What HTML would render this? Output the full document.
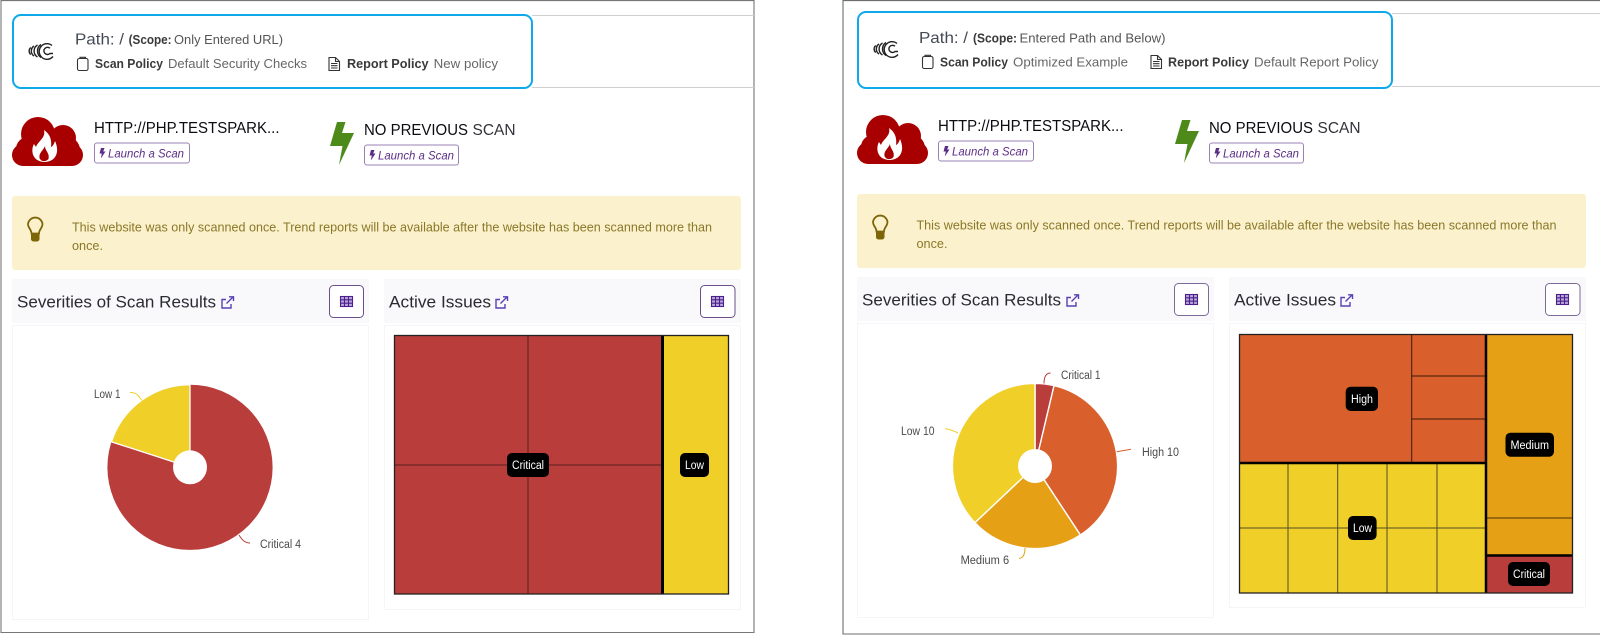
<!DOCTYPE html>
<html>
<head>
<meta charset="utf-8">
<title>Scan comparison</title>
<style>
html,body{margin:0;padding:0;background:#fff;width:1600px;height:635px;overflow:hidden}
svg{display:block}
text{font-family:"Liberation Sans",sans-serif}
.path{font-size:16px;fill:#444a55}
.sc{font-size:12.5px;fill:#3a3a3a;font-weight:bold}
.scv{font-size:13px;fill:#555}
.pl{font-size:12.5px;fill:#3a3a3a;font-weight:bold}
.pv{font-size:13px;fill:#666}
.h{font-size:16px;fill:#0c0c12}
.h2{font-size:16px;fill:#33333b}
.lz{font-size:12px;font-style:italic;fill:#5c2d86}
.al{font-size:13px;fill:#8a7728}
.t{font-size:17px;fill:#2a2a32}
.lb{font-size:11.500px;fill:#4a4a4a}
.tl{font-size:11.500px;fill:#fff}
</style>
</head>
<body>
<svg width="1600" height="635" viewBox="0 0 1600 635" xmlns="http://www.w3.org/2000/svg">
<rect width="1600" height="635" fill="#fff"/>

<!-- frames -->
<path d="M1 633V.6H754V632.5H1" fill="none" stroke="#777" stroke-width="1.100"/>
<path d="M1600 .6H843V634H1600" fill="none" stroke="#6e6e6e" stroke-width="1.100"/>

<!-- top lines -->
<path d="M532 15.500H754M532 87.500H754" stroke="#cfcfcf" stroke-width="1"/>
<path d="M1392 13.500H1600M1392 86.500H1600" stroke="#cfcfcf" stroke-width="1"/>

<!-- LEFT top box -->
<rect x="13" y="15" width="519" height="73" rx="8" fill="#fff" stroke="#0ea9e8" stroke-width="2"/>
<g fill="none" stroke="#222" stroke-width="1.400">
<path d="M52 45.500A7.800 7.800 0 1 0 53 56.500"/><path d="M50 48.300A3.600 3.600 0 1 0 50 53.500L53 53.500"/><path d="M41 44.500A7.800 7.800 0 0 0 41 57.500"/><path d="M37.500 45A7 7 0 0 0 37.500 57"/><path d="M34 46A6 6 0 0 0 34 56"/><path d="M30.800 47.500A4.500 4.500 0 0 0 30.800 54.500"/>
</g>
<text class="path" x="75" y="44.500" textLength="49" lengthAdjust="spacingAndGlyphs">Path: /</text>
<text class="sc" x="128.600" y="44" textLength="43" lengthAdjust="spacingAndGlyphs">(Scope:</text>
<text class="scv" x="174" y="44" textLength="109" lengthAdjust="spacingAndGlyphs">Only Entered URL)</text>
<g fill="none" stroke="#333" stroke-width="1.100">
<rect x="77.500" y="58.500" width="10.500" height="12" rx="1.800"/><path d="M80 58.500V57.300H85.500V58.500"/>
<path d="M329 57.500H335.500L339.500 61.500V70.500H329Z"/><path d="M335.500 57.500V61.500H339.500M331 63.500H337.500M331 65.700H337.500M331 68H337.500"/>
</g>
<text class="pl" x="95" y="68" textLength="68" lengthAdjust="spacingAndGlyphs">Scan Policy</text>
<text class="pv" x="168" y="68" textLength="139" lengthAdjust="spacingAndGlyphs">Default Security Checks</text>
<text class="pl" x="347" y="68" textLength="81.600" lengthAdjust="spacingAndGlyphs">Report Policy</text>
<text class="pv" x="433.700" y="68" textLength="64.300" lengthAdjust="spacingAndGlyphs">New policy</text>

<!-- RIGHT top box -->
<rect x="858" y="12" width="534" height="76" rx="8" fill="#fff" stroke="#0ea9e8" stroke-width="2"/>
<g transform="translate(845,-2)" fill="none" stroke="#222" stroke-width="1.400">
<path d="M52 45.500A7.800 7.800 0 1 0 53 56.500"/><path d="M50 48.300A3.600 3.600 0 1 0 50 53.500L53 53.500"/><path d="M41 44.500A7.800 7.800 0 0 0 41 57.500"/><path d="M37.500 45A7 7 0 0 0 37.500 57"/><path d="M34 46A6 6 0 0 0 34 56"/><path d="M30.800 47.500A4.500 4.500 0 0 0 30.800 54.500"/>
</g>
<text class="path" x="919" y="43" textLength="49" lengthAdjust="spacingAndGlyphs">Path: /</text>
<text class="sc" x="973" y="42.500" textLength="44" lengthAdjust="spacingAndGlyphs">(Scope:</text>
<text class="scv" x="1019.500" y="42.500" textLength="146" lengthAdjust="spacingAndGlyphs">Entered Path and Below)</text>
<g transform="translate(845,-2)" fill="none" stroke="#333" stroke-width="1.100">
<rect x="77.500" y="58.500" width="10.500" height="12" rx="1.800"/><path d="M80 58.500V57.300H85.500V58.500"/>
</g>
<g transform="translate(822,-2)" fill="none" stroke="#333" stroke-width="1.100">
<path d="M329 57.500H335.500L339.500 61.500V70.500H329Z"/><path d="M335.500 57.500V61.500H339.500M331 63.500H337.500M331 65.700H337.500M331 68H337.500"/>
</g>
<text class="pl" x="940" y="66.500" textLength="68" lengthAdjust="spacingAndGlyphs">Scan Policy</text>
<text class="pv" x="1013" y="66.500" textLength="115" lengthAdjust="spacingAndGlyphs">Optimized Example</text>
<text class="pl" x="1168" y="66.500" textLength="81" lengthAdjust="spacingAndGlyphs">Report Policy</text>
<text class="pv" x="1254" y="66.500" textLength="124.500" lengthAdjust="spacingAndGlyphs">Default Report Policy</text>

<!-- LEFT block -->
<g id="l">
<g fill="#a80000">
<circle cx="38" cy="134" r="17"/><circle cx="63" cy="138" r="13"/><circle cx="72" cy="155" r="11"/><circle cx="23" cy="155" r="11"/><circle cx="28" cy="149" r="12"/><circle cx="67" cy="150" r="13"/><rect x="23" y="135" width="49" height="31"/>
</g>
<path d="M44 130C46 138 38 141 36 147L34 144C31 149 31 161 44 162C56 162 60 152 55 141C54 144 53 146 51 147C52 140 50 134 44 130Z" fill="#fff"/>
<path d="M45 146C45 151 50 153 48.500 159C46 162 41 162 39.500 158C38.500 153 43 151 45 146Z" fill="#a80000"/>
<text class="h" x="94" y="133" textLength="185.500" lengthAdjust="spacingAndGlyphs">HTTP://PHP.TESTSPARK...</text>
<rect x="94.500" y="143" width="95" height="20" rx="2.500" fill="#fff" stroke="#9b80b5" stroke-width="1"/>
<path d="M101 148H104.500L103.200 151.500H105.500L100.800 158.500L101.800 153.500H99.500Z" fill="#5c2d86"/>
<text class="lz" x="108" y="157.500" textLength="76" lengthAdjust="spacingAndGlyphs">Launch a Scan</text>
<path d="M337 122H345.500L342 133H354L339 165L342.500 146H330Z" fill="#4d8a1a"/>
<text class="h" x="364" y="135" textLength="104" lengthAdjust="spacingAndGlyphs">NO PREVIOUS</text>
<text class="h2" x="472.500" y="135" textLength="43" lengthAdjust="spacingAndGlyphs">SCAN</text>
<rect x="364.500" y="145" width="94" height="20" rx="2.500" fill="#fff" stroke="#9b80b5" stroke-width="1"/>
<path d="M371 150H374.500L373.200 153.500H375.500L370.800 160.500L371.800 155.500H369.500Z" fill="#5c2d86"/>
<text class="lz" x="378" y="159.500" textLength="76" lengthAdjust="spacingAndGlyphs">Launch a Scan</text>

<rect x="12" y="196" width="729" height="74" rx="3" fill="#fbf2cd"/>
<g fill="none" stroke="#7d6608" stroke-width="1.800">
<path d="M31.500 233.500C31.500 229.500 28 228 28 224A7.300 7.300 0 0 1 42.500 224C42.500 228 39 229.500 39 233.500Z"/>
</g>
<path d="M31 233.500H39.500V239.500A3 3 0 0 1 36.500 241.500H34A3 3 0 0 1 31 239.500Z" fill="#7d6608"/>
<text class="al" x="72" y="231.500" textLength="640" lengthAdjust="spacingAndGlyphs">This website was only scanned once. Trend reports will be available after the website has been scanned more than</text>
<text class="al" x="72" y="250" textLength="31" lengthAdjust="spacingAndGlyphs">once.</text>

<rect x="12" y="279" width="357" height="44" fill="#f9f9fc"/>
<rect x="12.500" y="325.500" width="356" height="294" fill="#fff" stroke="#f3f5f8"/>
<text class="t" x="17" y="307.500" textLength="199" lengthAdjust="spacingAndGlyphs">Severities of Scan Results</text>
<g fill="none" stroke="#5a3fb5" stroke-width="1.400">
<path d="M231 304V308H222V299.500H226"/><path d="M226.500 303.500L233 297M229 296.800H233.500V301"/>
</g>
<rect x="329.500" y="285.500" width="34" height="32" rx="4" fill="#fff" stroke="#6a4f8a"/>
<g fill="none" stroke="#4b1f8c" stroke-width="1.100"><rect x="340.500" y="296.500" width="12" height="10" fill="#b9a8da"/><path d="M340.500 299.800H352.500M340.500 303.200H352.500M344.500 296.500V306.500M348.500 296.500V306.500"/></g>

<rect x="384" y="279" width="357" height="44" fill="#f9f9fc"/>
<rect x="384.500" y="325.500" width="356" height="284" fill="#fff" stroke="#f3f5f8"/>
<text class="t" x="389" y="307.500" textLength="102" lengthAdjust="spacingAndGlyphs">Active Issues</text>
<g transform="translate(274,0)" fill="none" stroke="#5a3fb5" stroke-width="1.400">
<path d="M231 304V308H222V299.500H226"/><path d="M226.500 303.500L233 297M229 296.800H233.500V301"/>
</g>
<rect x="700.500" y="285.500" width="34.500" height="32" rx="4" fill="#fff" stroke="#6a4f8a"/>
<g transform="translate(371,0)">
<g fill="none" stroke="#4b1f8c" stroke-width="1.100"><rect x="340.500" y="296.500" width="12" height="10" fill="#b9a8da"/><path d="M340.500 299.800H352.500M340.500 303.200H352.500M344.500 296.500V306.500M348.500 296.500V306.500"/></g>
</g>
</g>

<!-- RIGHT block (same structure, shifted) -->
<g transform="translate(845,-2)">
<g fill="#a80000">
<circle cx="38" cy="134" r="17"/><circle cx="63" cy="138" r="13"/><circle cx="72" cy="155" r="11"/><circle cx="23" cy="155" r="11"/><circle cx="28" cy="149" r="12"/><circle cx="67" cy="150" r="13"/><rect x="23" y="135" width="49" height="31"/>
</g>
<path d="M44 130C46 138 38 141 36 147L34 144C31 149 31 161 44 162C56 162 60 152 55 141C54 144 53 146 51 147C52 140 50 134 44 130Z" fill="#fff"/>
<path d="M45 146C45 151 50 153 48.500 159C46 162 41 162 39.500 158C38.500 153 43 151 45 146Z" fill="#a80000"/>
<text class="h" x="93" y="133" textLength="185.500" lengthAdjust="spacingAndGlyphs">HTTP://PHP.TESTSPARK...</text>
<rect x="93.500" y="143" width="95" height="20" rx="2.500" fill="#fff" stroke="#9b80b5" stroke-width="1"/>
<path d="M100 148H103.500L102.200 151.500H104.500L99.800 158.500L100.800 153.500H98.500Z" fill="#5c2d86"/>
<text class="lz" x="107" y="157.500" textLength="76" lengthAdjust="spacingAndGlyphs">Launch a Scan</text>
<path d="M337 122H345.500L342 133H354L339 165L342.500 146H330Z" fill="#4d8a1a"/>
<text class="h" x="364" y="135" textLength="104" lengthAdjust="spacingAndGlyphs">NO PREVIOUS</text>
<text class="h2" x="472.500" y="135" textLength="43" lengthAdjust="spacingAndGlyphs">SCAN</text>
<rect x="364.500" y="145" width="94" height="20" rx="2.500" fill="#fff" stroke="#9b80b5" stroke-width="1"/>
<path d="M371 150H374.500L373.200 153.500H375.500L370.800 160.500L371.800 155.500H369.500Z" fill="#5c2d86"/>
<text class="lz" x="378" y="159.500" textLength="76" lengthAdjust="spacingAndGlyphs">Launch a Scan</text>

<rect x="12" y="196" width="729" height="74" rx="3" fill="#fbf2cd"/>
<g fill="none" stroke="#7d6608" stroke-width="1.800">
<path d="M31.500 233.500C31.500 229.500 28 228 28 224A7.300 7.300 0 0 1 42.500 224C42.500 228 39 229.500 39 233.500Z"/>
</g>
<path d="M31 233.500H39.500V239.500A3 3 0 0 1 36.500 241.500H34A3 3 0 0 1 31 239.500Z" fill="#7d6608"/>
<text class="al" x="71.500" y="231.500" textLength="640" lengthAdjust="spacingAndGlyphs">This website was only scanned once. Trend reports will be available after the website has been scanned more than</text>
<text class="al" x="71.500" y="250" textLength="31" lengthAdjust="spacingAndGlyphs">once.</text>

<rect x="12" y="279" width="357" height="44" fill="#f9f9fc"/>
<rect x="12.500" y="325.500" width="356" height="294" fill="#fff" stroke="#f3f5f8"/>
<text class="t" x="17" y="307.500" textLength="199" lengthAdjust="spacingAndGlyphs">Severities of Scan Results</text>
<g fill="none" stroke="#5a3fb5" stroke-width="1.400">
<path d="M231 304V308H222V299.500H226"/><path d="M226.500 303.500L233 297M229 296.800H233.500V301"/>
</g>
<rect x="329.500" y="285.500" width="34" height="32" rx="4" fill="#fff" stroke="#7d6a99"/>
<g fill="none" stroke="#4b1f8c" stroke-width="1.100"><rect x="340.500" y="296.500" width="12" height="10" fill="#b9a8da"/><path d="M340.500 299.800H352.500M340.500 303.200H352.500M344.500 296.500V306.500M348.500 296.500V306.500"/></g>

<rect x="384" y="279" width="357" height="44" fill="#f9f9fc"/>
<rect x="384.500" y="325.500" width="356" height="284" fill="#fff" stroke="#f3f5f8"/>
<text class="t" x="389" y="307.500" textLength="102" lengthAdjust="spacingAndGlyphs">Active Issues</text>
<g transform="translate(274,0)" fill="none" stroke="#5a3fb5" stroke-width="1.400">
<path d="M231 304V308H222V299.500H226"/><path d="M226.500 303.500L233 297M229 296.800H233.500V301"/>
</g>
<rect x="700.500" y="285.500" width="34.500" height="32" rx="4" fill="#fff" stroke="#7d6a99"/>
<g transform="translate(371,0)">
<g fill="none" stroke="#4b1f8c" stroke-width="1.100"><rect x="340.500" y="296.500" width="12" height="10" fill="#b9a8da"/><path d="M340.500 299.800H352.500M340.500 303.200H352.500M344.500 296.500V306.500M348.500 296.500V306.500"/></g>
</g>
</g>

<!-- LEFT pie -->
<circle cx="190" cy="467.300" r="82.600" fill="#b83d3b"/>
<path d="M190 467.300L111.400 441.800A82.600 82.600 0 0 1 190 384.700Z" fill="#f0cf29" stroke="#fff" stroke-width="1.300"/>
<circle cx="190" cy="467.300" r="17" fill="#fff"/>
<path d="M130 392.500C136 392 139 396 142 400.500" fill="none" stroke="#f0cf29"/>
<path d="M239 535C242 540 245 543 250 543" fill="none" stroke="#b83d3b"/>
<text class="lb" x="94" y="398" textLength="26.500" lengthAdjust="spacingAndGlyphs">Low 1</text>
<text class="lb" x="260" y="548" textLength="41" lengthAdjust="spacingAndGlyphs">Critical 4</text>

<!-- RIGHT pie -->
<g stroke="#fff" stroke-width="1.400">
<path d="M1035 466L1035 383.400A82.600 82.600 0 0 1 1054.050 385.630Z" fill="#b83d3b"/>
<path d="M1035 466L1054.050 385.630A82.600 82.600 0 0 1 1080.390 535.010Z" fill="#d9602c"/>
<path d="M1035 466L1080.390 535.010A82.600 82.600 0 0 1 974.920 522.680Z" fill="#e5a016"/>
<path d="M1035 466L974.920 522.680A82.600 82.600 0 0 1 1035 383.400Z" fill="#f0cf29"/>
</g>
<circle cx="1035" cy="466" r="17" fill="#fff"/>
<path d="M1044 383.500C1044 377 1046 373 1050.600 373" fill="none" stroke="#b83d3b"/>
<path d="M1116.700 451.700L1131 449.300" fill="none" stroke="#d9602c"/>
<path d="M945 428.700C950 429 954 431 958 433" fill="none" stroke="#f0cf29"/>
<path d="M1025 548C1025 554 1023 558 1019 558.500" fill="none" stroke="#e5a016"/>
<text class="lb" x="1061" y="379" textLength="39.500" lengthAdjust="spacingAndGlyphs">Critical 1</text>
<text class="lb" x="1142" y="456" textLength="37" lengthAdjust="spacingAndGlyphs">High 10</text>
<text class="lb" x="901" y="435" textLength="33.500" lengthAdjust="spacingAndGlyphs">Low 10</text>
<text class="lb" x="960.600" y="564" textLength="48.500" lengthAdjust="spacingAndGlyphs">Medium 6</text>

<!-- LEFT treemap -->
<rect x="394" y="335" width="268" height="259" fill="#b83d3b"/>
<rect x="662" y="335" width="67" height="259" fill="#f0cf29"/>
<path d="M528 335V594M394 465H662" stroke="#5c1f1f" stroke-width="1"/>
<path d="M662.500 335V594" stroke="#000" stroke-width="3"/>
<rect x="394.500" y="335.500" width="334" height="258.500" fill="none" stroke="#222" stroke-width="1.300"/>
<rect x="507" y="453" width="42" height="24" rx="5" fill="#000"/>
<text class="tl" x="512" y="469" textLength="32" lengthAdjust="spacingAndGlyphs">Critical</text>
<rect x="680" y="453" width="29" height="24" rx="5" fill="#000"/>
<text class="tl" x="685" y="469" textLength="19" lengthAdjust="spacingAndGlyphs">Low</text>

<!-- RIGHT treemap -->
<rect x="1239" y="334" width="247" height="129" fill="#d9602c"/>
<rect x="1239" y="463" width="247" height="130" fill="#f0cf29"/>
<rect x="1486" y="334" width="87" height="221" fill="#e5a016"/>
<rect x="1486" y="555" width="87" height="38" fill="#b83d3b"/>
<path d="M1411.700 334V463M1411.700 376H1486M1411.700 419H1486" stroke="#3a1a0a" stroke-width="1"/>
<path d="M1288 463V593M1337.700 463V593M1387 463V593M1437 463V593M1239 528H1486" stroke="#222" stroke-opacity=".75" stroke-width="1"/>
<path d="M1486 518H1573" stroke="#4a3208" stroke-width="1"/>
<path d="M1239 463H1486M1486 334V593M1486 555.500H1573" stroke="#000" stroke-width="2.500"/>
<rect x="1239.500" y="334.500" width="333" height="258.500" fill="none" stroke="#222" stroke-width="1.300"/>
<rect x="1345.700" y="386.700" width="32.300" height="24.300" rx="5" fill="#000"/>
<text class="tl" x="1351" y="403" textLength="22" lengthAdjust="spacingAndGlyphs">High</text>
<rect x="1348" y="516" width="28.600" height="24" rx="5" fill="#000"/>
<text class="tl" x="1353" y="532" textLength="19" lengthAdjust="spacingAndGlyphs">Low</text>
<rect x="1505.500" y="432.700" width="48.500" height="24" rx="5" fill="#000"/>
<text class="tl" x="1510.500" y="449" textLength="38.500" lengthAdjust="spacingAndGlyphs">Medium</text>
<rect x="1508" y="562" width="42" height="24" rx="5" fill="#000"/>
<text class="tl" x="1513" y="578" textLength="32" lengthAdjust="spacingAndGlyphs">Critical</text>
</svg>
</body>
</html>
